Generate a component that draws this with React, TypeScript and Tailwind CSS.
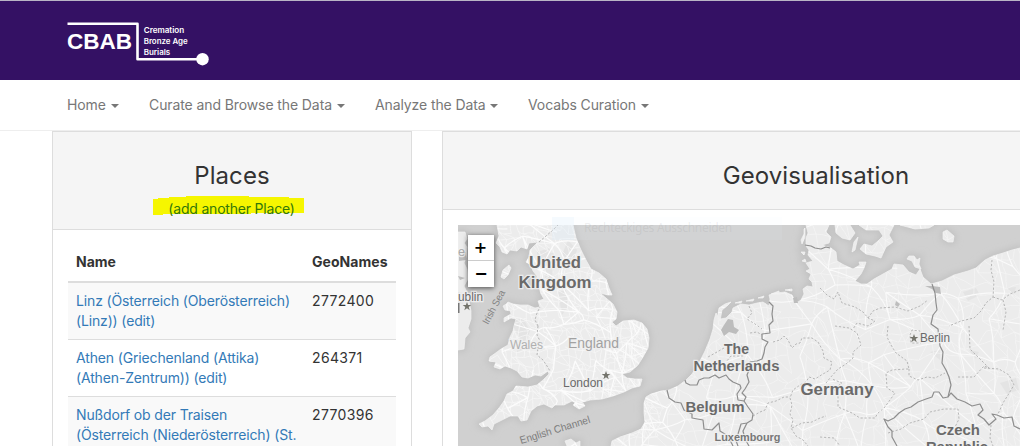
import type { ReactNode } from 'react';

const UK =
  'M497 225L499 236L496 243L500 247L502 252L507 254L510 250L517 251L521 247L527 249L529 243L538 242L534 246L530 250L529 257L526 262L531 265L533 271L537 276L536 282L539 287L541 294L544 299L538 301L540 307L535 308L528 305L520 305L513 304L508 302L505 307L510 309L511 314L504 318L504 322L511 318L516 319L514 326L513 331L510 337L508 345L501 349L497 352L490 357L489 361L496 362L494 367L500 369L505 366L511 368L517 371L522 377L528 378L535 375L541 376L548 371L549 374L543 380L537 385L528 387L516 386L513 391L507 394L504 401L499 408L493 415L485 421L479 424L482 427L488 426L492 430L494 424L502 420L510 416L518 416L521 421L527 420L531 411L537 406L544 404L552 408L555 405L564 405L572 401L578 404L583 402L590 400L602 399L613 396L624 392L632 388L640 386L642 379L635 379L627 378L622 374L630 372L638 365L643 357L648 348L649 338L647 329L642 323L634 320L623 321L616 326L612 322L616 319L617 312L613 304L606 298L600 293L608 295L612 295L609 288L606 279L599 273L591 269L586 260L581 250L576 238L573 225Z';
const IRELAND =
  'M458 232L465 232L467 239L464 243L467 247L466 257L464 263L467 269L468 279L464 286L467 292L469 301L471 311L471 319L468 328L470 332L465 338L464 349L458 350Z';
const CONTINENT =
  'M611 446L612 441L620 437L632 433L641 429L645 422L644 413L644 403L646 397L651 394L661 391L669 390L678 386L686 380L692 374L699 363L705 351L710 339L713 329L714 320L716 313L720 319L726 318L732 312L733 308L741 304L749 305L757 303L763 302L769 306L770 299L769 295L776 293L785 292L792 295L794 299L798 302L801 300L804 294L803 289L807 286L813 287L812 282L809 279L811 274L806 271L810 269L806 263L813 261L808 255L809 250L806 246L806 238L808 233L806 225L829 225L826 232L831 237L829 243L822 245L831 248L836 252L837 261L844 265L853 269L860 265L859 262L866 262L864 268L861 274L855 281L861 284L867 284L874 279L883 274L892 269L894 264L903 265L909 272L916 275L920 269L923 277L931 284L942 281L954 275L968 271L976 268L985 260L993 256L1003 253L1012 250L1020 248L1020 446Z';
const ISLANDS =
  'M501 277L503 270L509 265L511 268L508 275L504 279ZM503 306L508 303L515 306L511 311L505 310ZM573 405L577 401L583 403L585 406L579 409ZM565 441L571 439L576 443L580 441L580 446L567 446Z' +
  'M835 225L850 225L855 233L850 240L842 238L836 233ZM859 225L894 225L889 235L893 242L886 247L881 258L875 256L866 254L860 249L864 244L872 246L878 241L883 236L879 230L866 230ZM852 252L854 242L858 237L855 250Z' +
  'M900 225L934 225L929 228L915 229ZM943 232L947 230L954 236L953 242L948 242L943 239ZM907 259L909 256L914 256L917 260L920 258L919 264L921 269L915 267L912 261Z' +
  'M718 314L719 308L725 304L731 302L727 306L722 310L720 321ZM735 303L742 301L741 303ZM746 301L754 299L753 301ZM758 298L764 296L763 298ZM771 294L779 291L779 293ZM785 290L792 289L792 291ZM801 240L804 234L804 229L805 228L805 237L802 244ZM801 252L805 252L804 255ZM802 261L805 259L806 262Z';
const LAND = [UK, IRELAND, CONTINENT, ISLANDS];

function seeded(seed: number) {
  let s = seed;
  return () => {
    s = (s * 16807) % 2147483647;
    return s / 2147483647;
  };
}

function roads(x0: number, y0: number, x1: number, y1: number, step: number, seed: number) {
  const rnd = seeded(seed);
  const cols = Math.ceil((x1 - x0) / step) + 1;
  const rows = Math.ceil((y1 - y0) / step) + 1;
  const pts: number[][][] = [];
  for (let r = 0; r < rows; r++) {
    pts.push([]);
    for (let c = 0; c < cols; c++) {
      pts[r].push([x0 + (c + (rnd() - 0.5) * 0.9) * step, y0 + (r + (rnd() - 0.5) * 0.9) * step]);
    }
  }
  let d = '';
  const link = (a: number[], b: number[]) => {
    const mx = (a[0] + b[0]) / 2 + (rnd() - 0.5) * step * 0.35;
    const my = (a[1] + b[1]) / 2 + (rnd() - 0.5) * step * 0.35;
    d += `M${a[0].toFixed(1)} ${a[1].toFixed(1)}Q${mx.toFixed(1)} ${my.toFixed(1)} ${b[0].toFixed(1)} ${b[1].toFixed(1)}`;
  };
  for (let r = 0; r < rows; r++) {
    for (let c = 0; c < cols; c++) {
      if (c + 1 < cols && rnd() < 0.8) link(pts[r][c], pts[r][c + 1]);
      if (r + 1 < rows && rnd() < 0.8) link(pts[r][c], pts[r + 1][c]);
      if (c + 1 < cols && r + 1 < rows && rnd() < 0.35) link(pts[r][c], pts[r + 1][c + 1]);
    }
  }
  return d;
}

const MINOR_UK = roads(490, 225, 655, 430, 7, 71);
const MAJOR_UK = roads(490, 225, 655, 430, 20, 19);
const MINOR_EU = roads(610, 225, 1020, 446, 12, 37);
const MAJOR_EU = roads(610, 225, 1020, 446, 32, 53);

const BORDERS = [
  'M805 245L811 246L815 248L821 249L826 247L830 248',
  'M769 302L773 306L772 314L773 321L769 325L770 333L762 334L762 339L768 342L765 347L764 353L762 359L757 361L750 362L749 370L747 375L749 382L745 389L742 393L746 397L744 401L738 400L737 394L741 388L740 385L733 382L729 379L726 375L719 378L715 375L709 378L704 378L699 380L697 385L690 385L686 383L685 380',
  'M667 390L669 398L675 402L681 403L684 410L692 414L692 418L703 420L704 429L712 430L719 423L720 431L728 436L733 446',
  'M744 401L748 407L753 414L752 420L747 423L743 431L745 439L749 446M747 423L741 424L738 434L735 438L738 446',
  'M932 284L935 293L936 303L937 310L933 315L931 324L938 329L939 338L940 346L943 352L942 363L946 370L949 377L951 385L948 397L943 398L939 392L934 392L932 397L926 399L918 402L911 407L905 409L899 413L894 418L888 421L884 419L888 427L892 431L892 437L897 446',
  'M948 397L951 393L957 399L965 402L972 406L980 404L983 410L978 415L984 419L989 425L996 419L992 414L997 415L1004 418L1012 417L1014 426L1020 429',
];

const REGIONS = [
  'M538 326L537 335L540 341L538 348L537 355L543 360L547 366L550 371M538 326L535 320L537 313L540 307M539 242L546 236L553 230L558 225',
  'M773 342L780 340L784 336L788 340L792 348L796 344L800 343L802 338L812 338L818 342L823 351L824 358L832 362L830 370L823 374L815 379L809 377L806 382L800 385L793 390L790 398L792 405L790 414L793 420L791 428L796 436L803 440L808 446',
  'M753 416L760 412L765 410L768 403L776 401L784 397L790 397M792 428L802 423L812 422L820 418L826 416',
  'M749 306L752 313L747 319L755 324L762 329M750 333L757 332L762 335M741 346L748 350L744 356L731 356L726 362M724 348L717 352L708 357',
  'M820 288L827 295L834 299L838 292L842 303L855 307L863 312L868 318L875 321L868 326L857 323L853 329',
  'M868 318L873 311L880 308L895 307L908 311L920 306L928 300M835 326L849 328L857 333L861 345L853 352L853 358L846 364L838 369L830 378L826 383',
  'M888 326L887 337L891 345L896 353L907 361L909 369L906 369L892 370L886 373L887 388L895 393L890 400L884 408L878 413L875 418L860 418L852 413L838 407L838 396L834 389L842 383L832 379',
  'M909 369L909 376L918 380L927 377L935 378L945 373',
  'M992 260L991 270L994 282L993 297L986 303L981 311L974 318L961 321L949 326M993 297L1002 300L1010 294L1020 290M1003 300L1006 312L1003 330',
  'M969 326L970 349L977 356L989 368L984 366L974 377L958 377M984 368L999 369L1009 375L1014 385L1008 395L1003 403L998 414',
  'M888 433L901 429L910 423L924 419L930 412L944 409L958 409L959 419L955 427M991 425L990 438L993 446M820 437L834 438L840 446',
  'M910 335L912 330L920 331L921 343L911 343Z',
];

type LabelProps = { x: number; y: number; w: number; size: number; children: string; bold?: boolean; fill?: string; rotate?: number };

function Label({ x, y, w, size, children, bold = false, fill = '#6a6a6a', rotate = 0 }: LabelProps) {
  return (
    <text
      x={x}
      y={y}
      textLength={w}
      lengthAdjust="spacingAndGlyphs"
      fontSize={size}
      fontWeight={bold ? 700 : 400}
      fill={fill}
      stroke="#f0f0f0"
      strokeWidth={rotate ? 0 : 2.5}
      strokeOpacity={0.85}
      paintOrder="stroke"
      transform={rotate ? `rotate(${rotate} ${x} ${y})` : undefined}
    >
      {children}
    </text>
  );
}

function Star({ x, y }: { x: number; y: number }) {
  return (
    <path
      transform={`translate(${x} ${y})`}
      d="M0-4.5L1.1-1.4L4.3-1.4L1.7.5L2.7 3.7L0 1.8L-2.7 3.7L-1.7.5L-4.3-1.4L-1.1-1.4Z"
      fill="#74746c"
    />
  );
}

function EuropeMap() {
  return (
    <svg viewBox="458 225 562 221" className="block h-[221px] w-[562px] font-['Liberation_Sans',sans-serif]">
      <defs>
        <clipPath id="land">
          {LAND.map((d) => (
            <path key={d} d={d} />
          ))}
        </clipPath>
        <filter id="soft" x="-5%" y="-5%" width="110%" height="110%">
          <feGaussianBlur stdDeviation="3" />
        </filter>
      </defs>
      <rect x="458" y="225" width="562" height="221" fill="#d0d0d0" />
      <g filter="url(#soft)" fill="#c0c0c0" stroke="#c2c2c2" strokeWidth="5">
        {LAND.map((d) => (
          <path key={d} d={d} />
        ))}
      </g>
      <g fill="#ececec" stroke="#f4f4f4" strokeWidth="0.7">
        {LAND.map((d) => (
          <path key={d} d={d} />
        ))}
      </g>
      <g clipPath="url(#land)" fill="none">
        <g fill="#e4e4e4">
          <path d="M537 252L550 248L558 260L553 272L558 285L551 292L544 284L546 271L537 264ZM511 322L523 318L530 331L524 349L515 353L520 339ZM558 292L566 290L568 306L562 315ZM568 240L577 250L573 262L562 255ZM457 292L466 293L463 304L457 303Z" />
          <path d="M963 292L976 288L980 295L968 301ZM1006 288L1016 287L1014 295ZM969 350L979 352L976 359ZM1000 383L1016 378L1019 390L1007 394ZM930 352L940 350L940 360Z" />
        </g>
        <path d={MINOR_UK} stroke="#f8f8f8" strokeWidth="0.7" />
        <path d={MAJOR_UK} stroke="#fcfcfc" strokeWidth="1.2" />
        <path d={MINOR_EU} stroke="#f6f6f6" strokeWidth="0.6" />
        <path d={MAJOR_EU} stroke="#fafafa" strokeWidth="1.1" />
      </g>
      <g fill="#bdbdbd">
        <path d="M724 325L728 319L733 320L734 327L739 330L736 334L729 332L724 336L721 330ZM925 286L932 286L940 287L941 294L936 293L932 289ZM896 301L900 304L898 307L895 305ZM793 298L797 297L798 303L794 303ZM459 255L466 252L466 260L459 261ZM458 276L465 278L460 280Z" />
      </g>
      <g fill="none" stroke="#b0b0b0" strokeWidth="0.9" strokeDasharray="2.2 1.8">
        {REGIONS.map((d) => (
          <path key={d} d={d} />
        ))}
      </g>
      <g fill="none" stroke="#8e8e8e" strokeWidth="1.2" strokeLinejoin="round">
        {BORDERS.map((d) => (
          <path key={d} d={d} />
        ))}
      </g>
      <path d="M458.500 303v10" stroke="#777" strokeWidth="2" />
      <Label x={458} y={256} w={7} size={12} fill="#aaa">e</Label>
      <Label x={458} y={301} w={25} size={12}>ublin</Label>
      <Star x={467} y={306.500} />
      <Label x={488} y={325} w={37} size={10} rotate={-62} fill="#828282">Irish Sea</Label>
      <Label x={529} y={268} w={52} size={17} bold>United</Label>
      <Label x={518.500} y={288} w={73} size={17} bold>Kingdom</Label>
      <Label x={510} y={349} w={33} size={12} fill="#b0b0b0">Wales</Label>
      <Label x={568} y={348} w={51} size={14} fill="#a2a2a2">England</Label>
      <Label x={563} y={387} w={40} size={12}>London</Label>
      <Star x={606} y={375.500} />
      <Label x={521} y={444} w={73} size={10.500} rotate={-17} fill="#7c7c7c">English Channel</Label>
      <Label x={724} y={354} w={25} size={14.500} bold>The</Label>
      <Label x={693.500} y={371} w={86} size={14.500} bold>Netherlands</Label>
      <Label x={685.500} y={412} w={59} size={14.500} bold>Belgium</Label>
      <Label x={714.500} y={441} w={66} size={11.500} bold fill="#777">Luxembourg</Label>
      <Label x={800.500} y={395} w={73} size={17} bold>Germany</Label>
      <Star x={914} y={338.500} />
      <Label x={920} y={342} w={30} size={12}>Berlin</Label>
      <Label x={936} y={435} w={44} size={14.500} bold>Czech</Label>
      <Label x={926} y={452} w={62} size={14.500} bold>Republic</Label>
    </svg>
  );
}

function Logo() {
  return (
    <svg viewBox="66 20 146 48" className="h-12 w-[146px] font-['Liberation_Sans',sans-serif]" fill="#fff">
      <path d="M67.500 23.800H137.500V59.200H202" fill="none" stroke="#fff" strokeWidth="2.600" strokeLinejoin="round" />
      <circle cx="202.500" cy="59.200" r="6.200" />
      <text x="67" y="49.200" fontSize="22.500" fontWeight="700" textLength="65" lengthAdjust="spacingAndGlyphs">CBAB</text>
      <g className="font-['Inter',sans-serif]" fontSize="7.800" fontWeight="600">
        <text x="143.700" y="32.800" textLength="40.500" lengthAdjust="spacingAndGlyphs">Cremation</text>
        <text x="143.700" y="43.800" textLength="44" lengthAdjust="spacingAndGlyphs">Bronze Age</text>
        <text x="143.700" y="54.600" textLength="26.500" lengthAdjust="spacingAndGlyphs">Burials</text>
      </g>
    </svg>
  );
}

function NavItem({ width, children }: { width: string; children: ReactNode }) {
  return (
    <a className={`flex items-center justify-between ${width}`}>
      <span className="whitespace-nowrap">{children}</span>
      <span className="mt-0.5 h-0 w-0 border-x-4 border-t-4 border-x-transparent border-t-[#777]" />
    </a>
  );
}

const PLACES = [
  { lines: ['Linz (Österreich (Oberösterreich)', '(Linz)) (edit)'], id: '2772400' },
  { lines: ['Athen (Griechenland (Attika)', '(Athen-Zentrum)) (edit)'], id: '264371' },
  { lines: ['Nußdorf ob der Traisen', '(Österreich (Niederösterreich) (St.'], id: '2770396' },
];

export default function App() {
  return (
    <div className="flex h-[446px] w-[1020px] flex-col overflow-hidden bg-white font-['Inter',sans-serif] text-sm leading-5 text-[#333]">
      <header className="h-20 shrink-0 border-t border-[#b9b5c5] bg-[#341164] pt-[19px] pl-[66px]">
        <Logo />
      </header>
      <nav className="flex h-[51px] shrink-0 items-center gap-[30px] border-b border-[#eee] pl-[67px] tracking-[-0.1px] text-[#777]">
        <NavItem width="w-[52px]">Home</NavItem>
        <NavItem width="w-[196px]">Curate and Browse the Data</NavItem>
        <NavItem width="w-[123px]">Analyze the Data</NavItem>
        <NavItem width="w-[121px]">Vocabs Curation</NavItem>
      </nav>
      <main className="flex min-h-0 flex-1 gap-[30px] pl-[52px]">
        <section className="w-[360px] shrink-0 border border-b-0 border-[#ddd]">
          <div className="flex h-[98px] flex-col items-center border-b border-[#ddd] bg-[#f5f5f5] pt-[30px]">
            <h2 className="text-[24px] leading-[27px] tracking-[0.1px]">Places</h2>
            <div className="relative mt-[10px] mr-[1px]">
              <svg className="absolute -top-1 left-[-15px] h-5 w-[151px]" viewBox="0 0 151 20">
                <path d="M0 4H5V3H16V2H33V1H96V2H136V3H151V18H98V19H10V20H0Z" fill="#f6f600" />
              </svg>
              <a className="relative tracking-[-0.2px] text-[#33780a]">(add another Place)</a>
            </div>
          </div>
          <table className="mx-[15px] mt-[15px] w-[328px] table-fixed border-collapse text-left">
            <thead>
              <tr className="h-[37px] border-b-2 border-[#ddd]">
                <th className="w-[236px] px-2 pb-0.5 font-bold">Name</th>
                <th className="px-2 pb-0.5 font-bold tracking-[0.05px]">GeoNames</th>
              </tr>
            </thead>
            <tbody className="align-top">
              {PLACES.map((place) => (
                <tr key={place.id} className="border-b border-[#ddd] odd:bg-[#f9f9f9]">
                  <td className="p-2 whitespace-nowrap tracking-[-0.15px] text-[#337ab7]">
                    {place.lines.map((line) => (
                      <div key={line}>{line}</div>
                    ))}
                  </td>
                  <td className="p-2 tracking-[0.35px]">{place.id}</td>
                </tr>
              ))}
            </tbody>
          </table>
        </section>
        <section className="w-[664px] shrink-0 border border-b-0 border-[#ddd]">
          <div className="flex h-[78px] justify-center border-b border-[#ddd] bg-[#f5f5f5] pt-[30px]">
            <h2 className="mr-[-84px] h-[27px] w-[748px] text-center text-[24px] leading-[27px] tracking-[0.05px]">Geovisualisation</h2>
          </div>
          <div className="relative p-[15px]">
            <EuropeMap />
            <div className="absolute top-[25px] left-[25px] flex w-[26px] flex-col bg-white text-center font-['DejaVu_Sans',sans-serif] text-[16px] font-bold text-black shadow-[0_1px_5px_rgba(0,0,0,0.65)]">
              <button className="h-[26px] border-b border-[#ccc] pr-px leading-[24px]">+</button>
              <button className="h-[26px] leading-[22px]">−</button>
            </div>
            <div className="absolute top-[7px] left-[109px] flex h-[23px] w-[230px] bg-[#e8f4ff]/10 font-['Noto_Sans',sans-serif] text-[12px] tracking-[-0.3px]">
              <span className="w-[22px] bg-[#d9ecfa]/20" />
              <span className="pl-[10px] leading-[22px] whitespace-nowrap text-[#888]/15">Rechteckiges Ausschneiden</span>
            </div>
          </div>
        </section>
      </main>
    </div>
  );
}
